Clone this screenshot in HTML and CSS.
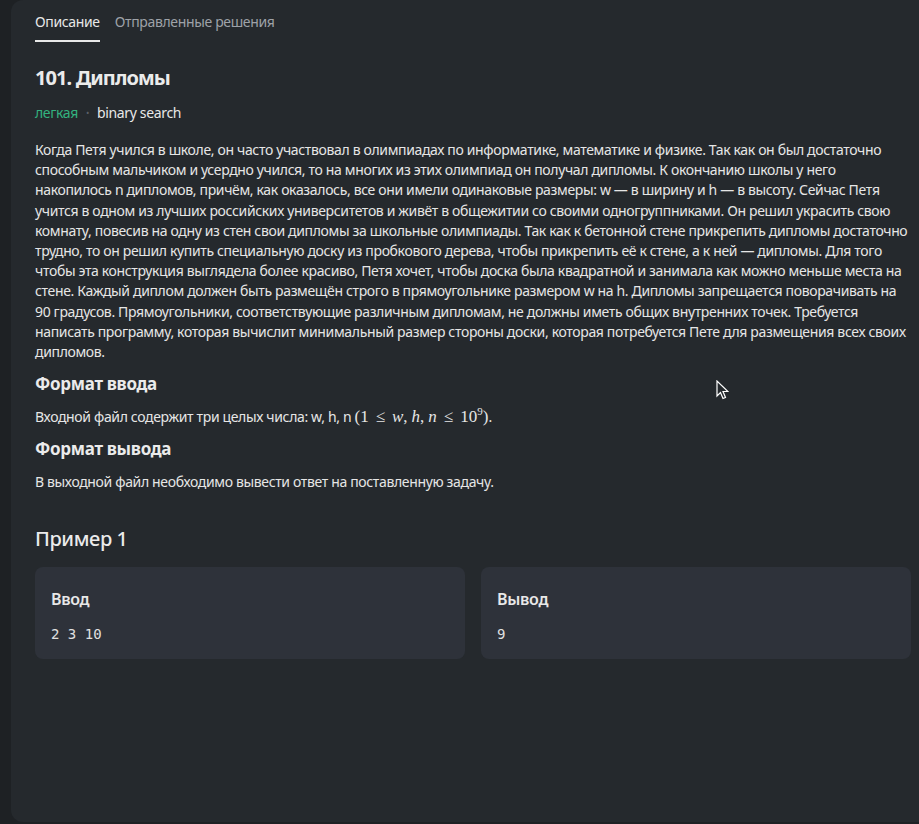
FILE: index.html
```html
<!DOCTYPE html>
<html lang="ru">
<head>
<meta charset="utf-8">
<title>101. Дипломы</title>
<link rel="stylesheet" href="styles.css">
</head>
<body>
<div class="page">
  <main class="panel">
    <nav class="tabs">
      <span class="tab active">Описание</span>
      <span class="tab">Отправленные решения</span>
    </nav>
    <h1 class="title">101. Дипломы</h1>
    <div class="tags">
      <span class="level">легкая</span>
      <span class="dot">•</span>
      <span class="tag">binary search</span>
    </div>
    <p class="text">Когда Петя учился в школе, он часто участвовал в олимпиадах по информатике, математике и физике. Так как он был достаточно способным мальчиком и усердно учился, то на многих из этих олимпиад он получал дипломы. К окончанию школы у него накопилось n дипломов, причём, как оказалось, все они имели одинаковые размеры: w — в ширину и h — в высоту. Сейчас Петя учится в одном из лучших российских университетов и живёт в общежитии со своими одногруппниками. Он решил украсить свою комнату, повесив на одну из стен свои дипломы за школьные олимпиады. Так как к бетонной стене прикрепить дипломы достаточно трудно, то он решил купить специальную доску из пробкового дерева, чтобы прикрепить её к стене, а к ней — дипломы. Для того чтобы эта конструкция выглядела более красиво, Петя хочет, чтобы доска была квадратной и занимала как можно меньше места на стене. Каждый диплом должен быть размещён строго в прямоугольнике размером w на h. Дипломы запрещается поворачивать на 90 градусов. Прямоугольники, соответствующие различным дипломам, не должны иметь общих внутренних точек. Требуется написать программу, которая вычислит минимальный размер стороны доски, которая потребуется Пете для размещения всех своих дипломов.</p>
    <h2 class="section">Формат ввода</h2>
    <p class="text">Входной файл содержит три целых числа: w, h, n <span class="math">(1<span class="rel">≤</span><i>w</i>,<i class="sp">h</i>,<i class="sp">n</i><span class="rel">≤</span>10<sup>9</sup>)</span>.</p>
    <h2 class="section">Формат вывода</h2>
    <p class="text">В выходной файл необходимо вывести ответ на поставленную задачу.</p>
    <h2 class="example-title">Пример 1</h2>
    <div class="examples">
      <div class="card">
        <h3 class="card-title">Ввод</h3>
        <pre class="code">2 3 10</pre>
      </div>
      <div class="card">
        <h3 class="card-title">Вывод</h3>
        <pre class="code">9</pre>
      </div>
    </div>
  </main>
  <svg class="cursor" width="13" height="20" viewBox="0 0 13 20" aria-hidden="true">
    <path d="M1 1 L1 16 L4.5 12.5 L7 18.5 L9.5 17.5 L7 11.5 L12 11.5 Z" fill="#25292d" stroke="#ffffff" stroke-width="1.2" stroke-linejoin="miter"/>
  </svg>
</div>
</body>
</html>
```

FILE: styles.css
```css
* { box-sizing: border-box; }
html, body {
  margin: 0;
  padding: 0;
  background: #1e2124;
  height: 100%;
  overflow: hidden;
}
body {
  font-family: "Noto Sans", "Open Sans", sans-serif;
  color: #e8e8e8;
}
.page {
  position: relative;
  height: 824px;
  padding: 0 0 2px 11px;
}
.panel {
  background: #25292d;
  height: 822px;
  width: 940px;
  border-radius: 12px 0 0 12px;
  padding: 0 40px 0 24px;
}
.tabs {
  display: flex;
  gap: 15px;
  height: 42px;
  align-items: stretch;
}
.tab {
  font-size: 14px;
  color: #9ea2a8;
  padding-top: 12px;
  line-height: 20px;
  letter-spacing: -0.35px;
  border-bottom: 2px solid transparent;
}
.tab.active {
  color: #e8e8e8;
  border-bottom-color: #e8e8e8;
}
.title {
  margin: 22px 0 0;
  font-size: 20px;
  font-weight: 700;
  line-height: 28px;
  letter-spacing: -0.9px;
  color: #ebebeb;
}
.tags {
  margin-top: 11px;
  display: flex;
  gap: 8px;
  align-items: center;
  font-size: 14px;
  line-height: 20px;
  letter-spacing: -0.35px;
}
.level { color: #33b27f; }
.dot { color: #5b6068; font-size: 9px; }
.tag { color: #e8e8e8; }
.text {
  margin: 17px 0 0;
  font-size: 14px;
  line-height: 20.2px;
  color: #e6e6e6;
  letter-spacing: -0.35px;
}
.section {
  margin: 10px 0 0;
  font-size: 17px;
  font-weight: 700;
  line-height: 24px;
  letter-spacing: -0.3px;
  color: #ebebeb;
}
.section + .text { margin-top: 11px; }
.math {
  font-family: "Liberation Serif", "DejaVu Serif", serif;
  font-size: 17px;
  letter-spacing: 0;
}
.math .rel { margin: 0 7px; }
.math .sp { margin-left: 4px; }
.math sup { font-size: 11px; line-height: 0; }
.example-title {
  margin: 32px 0 0;
  font-size: 20px;
  font-weight: 500;
  line-height: 28px;
  letter-spacing: -0.4px;
  color: #ebebeb;
}
.examples {
  margin-top: 14px;
  display: grid;
  grid-template-columns: 430px 430px;
  gap: 16px;
}
.card {
  background: #2e323a;
  border-radius: 8px;
  padding: 21px 16px 18px;
  height: 92px;
}
.card-title {
  margin: 0;
  font-size: 16px;
  font-weight: 600;
  line-height: 22px;
  letter-spacing: -0.3px;
  color: #e8e8e8;
}
.code {
  margin: 15px 0 0;
  font-family: "DejaVu Sans Mono", "Liberation Mono", monospace;
  font-size: 14px;
  line-height: 18px;
  color: #e0e0e0;
}
.cursor {
  position: absolute;
  left: 716px;
  top: 380px;
}
```
